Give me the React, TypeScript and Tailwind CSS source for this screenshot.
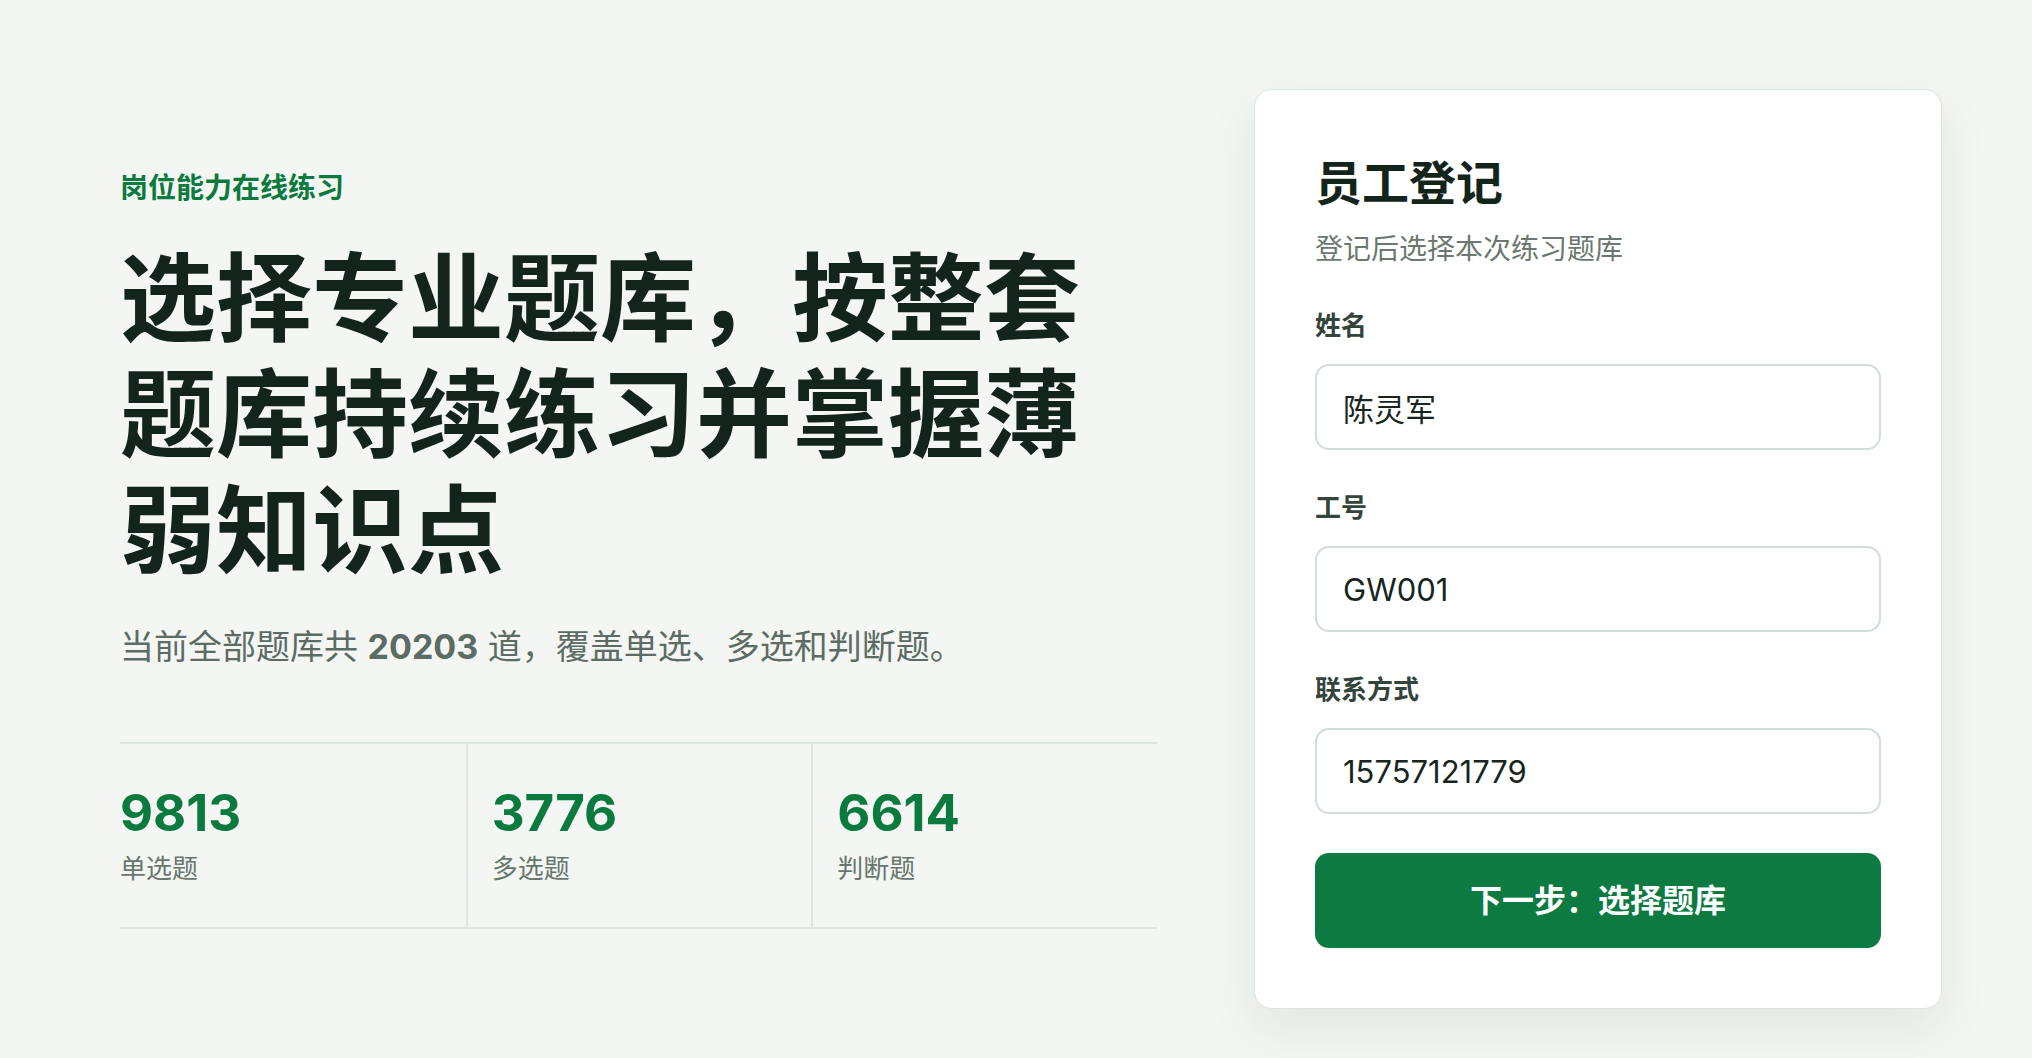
import React from "react";

const stats = [
  { value: "9813", label: "单选题" },
  { value: "3776", label: "多选题" },
  { value: "6614", label: "判断题" },
];

const fields = [
  { label: "姓名", value: "陈灵军" },
  { label: "工号", value: "GW001" },
  { label: "联系方式", value: "15757121779" },
];

export default function App() {
  return (
    <div className="min-h-screen bg-[#f3f6f3] font-['Inter','Noto_Sans_CJK_SC',sans-serif] text-[#13241b]">
      <main className="flex items-center gap-[97px] pl-[120px] pr-[90px] pt-[89px] pb-[49px]">
        <section className="min-w-0 flex-1">
          <p className="text-[28px] font-bold leading-[38.5px] text-[#0b7a3e]">岗位能力在线练习</p>
          <h1 className="mt-[33px] text-[96px] font-bold leading-[116px] text-[#13241b]">
            选择专业题库，按整套题库持续练习并掌握薄弱知识点
          </h1>
          <p className="mt-[33px] text-[34px] leading-[51px] text-[#5c6b63]">
            当前全部题库共 <span className="font-bold">20203</span> 道，覆盖单选、多选和判断题。
          </p>

          <div className="mt-[70px] grid grid-cols-3 border-y-2 border-[#dfe6e2]">
            {stats.map((s, i) => (
              <div
                key={s.label}
                className={
                  i === 0
                    ? "pt-[39px] pb-10 pr-6"
                    : "border-l-2 border-[#dfe6e2] pt-[39px] pb-10 pl-6 pr-6"
                }
              >
                <div className="text-[51px] font-bold leading-[60px] text-[#0b7a3e]">{s.value}</div>
                <div className="mt-2 text-[26px] leading-[36.4px] text-[#68766e]">{s.label}</div>
              </div>
            ))}
          </div>
        </section>

        <aside className="w-[688px] shrink-0 rounded-[18px] border border-[#dde5e0] bg-white px-[60px] pt-[62px] pb-[60px] shadow-[0_20px_50px_rgba(30,60,40,0.08)]">
          <h2 className="text-[47px] font-bold leading-[61px] text-[#13241b]">员工登记</h2>
          <p className="mt-[17px] text-[28px] leading-[39px] text-[#6a786f]">登记后选择本次练习题库</p>

          <form className="mt-[39px] flex flex-col gap-10" onSubmit={(e) => e.preventDefault()}>
            {fields.map((f) => (
              <label key={f.label} className="block">
                <span className="block text-[26px] font-bold leading-[36px] text-[#33443a]">{f.label}</span>
                <input
                  defaultValue={f.value}
                  className="mt-5 block h-[86px] w-full rounded-[14px] border-2 border-[#d3ded8] bg-white px-[26px] text-[31px] text-[#17261d] outline-none focus:border-[#0b7a3e]"
                />
              </label>
            ))}
          </form>

          <button
            type="button"
            className="mt-[39px] h-[95px] w-full rounded-[14px] bg-[#0c7a41] text-[32px] font-bold text-white"
          >
            下一步：选择题库
          </button>
        </aside>
      </main>
    </div>
  );
}
